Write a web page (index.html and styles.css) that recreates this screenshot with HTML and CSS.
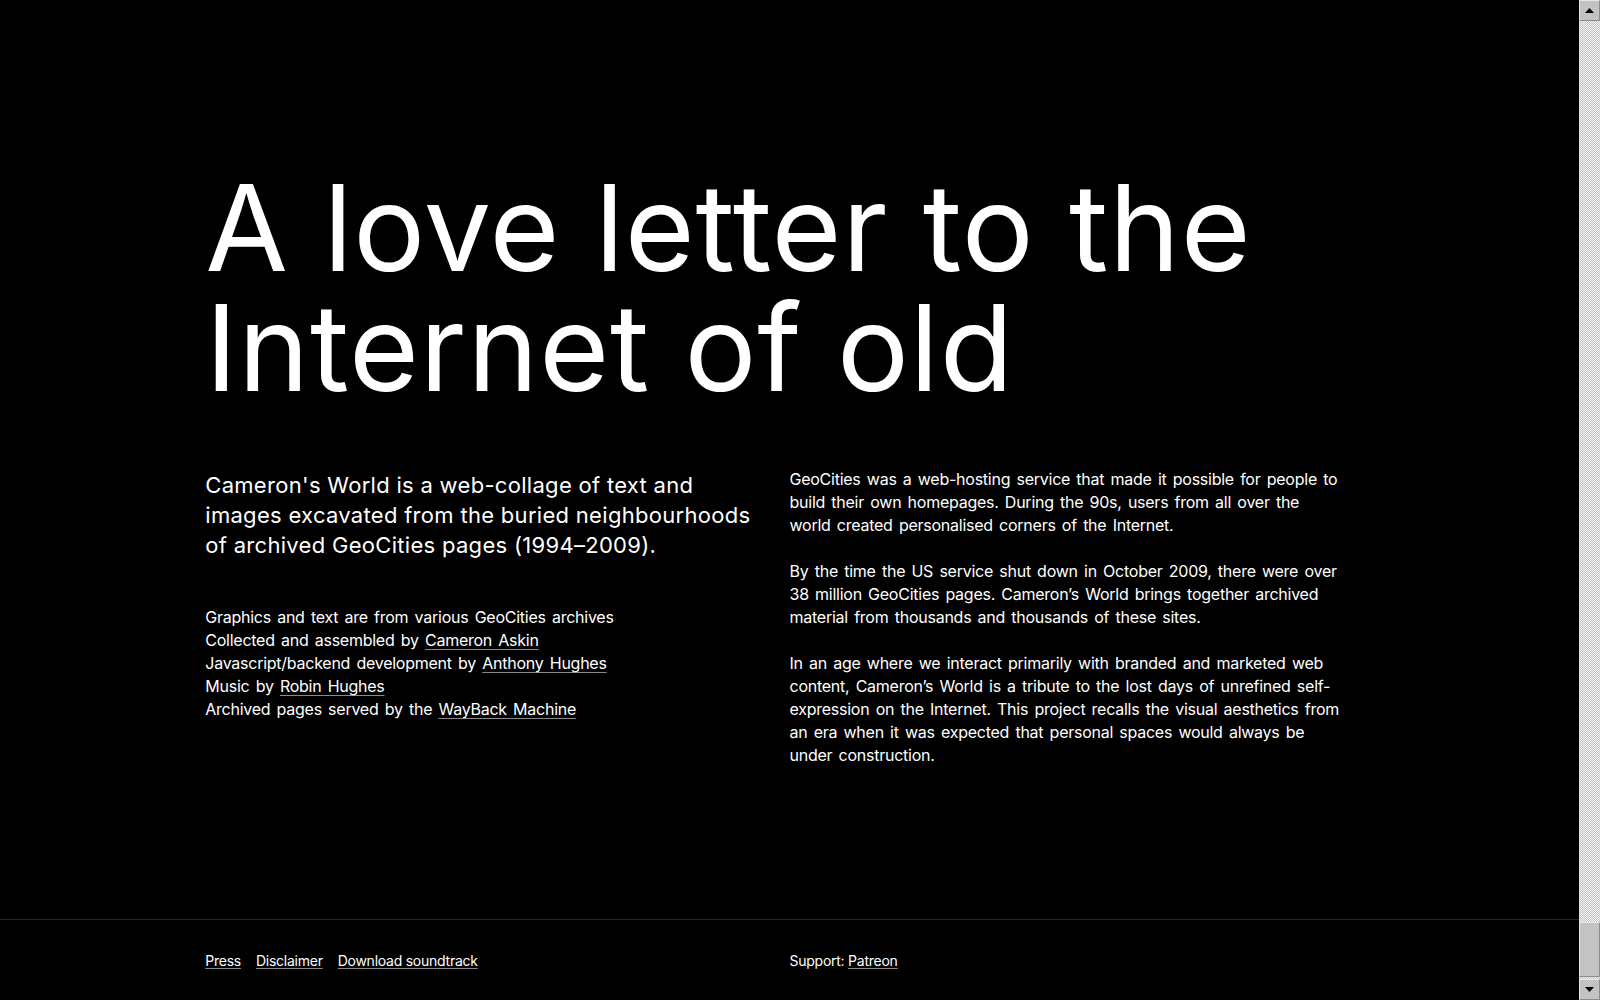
FILE: index.html
```html
<!DOCTYPE html>
<html>
<head>
  <meta charset="UTF-8">
  <title>Cameron's World</title>
  <link rel="stylesheet" href="styles.css">
</head>

<body>
  <div class="page">
    <section class="about">
      <h1 class="title">A love letter to the<br>Internet of old</h1>

      <div class="columns">
        <div class="col">
          <p class="lead">Cameron's World is a web-collage of text and images excavated from the buried neighbourhoods of archived GeoCities pages (1994&ndash;2009).</p>
          <p class="credits">
            Graphics and text are from various GeoCities archives<br>
            Collected and assembled by <a href="#">Cameron Askin</a><br>
            Javascript/backend development by <a href="#">Anthony Hughes</a><br>
            Music by <a href="#">Robin Hughes</a><br>
            Archived pages served by the <a href="#">WayBack Machine</a>
          </p>
        </div>
        <div class="col">
          <p>GeoCities was a web-hosting service that made it possible for people to build their own homepages. During the 90s, users from all over the world created personalised corners of the Internet.</p>
          <p>By the time the US service shut down in October 2009, there were over 38 million GeoCities pages. Cameron&rsquo;s World brings together archived material from thousands and thousands of these sites.</p>
          <p>In an age where we interact primarily with branded and marketed web content, Cameron&rsquo;s World is a tribute to the lost days of unrefined self-expression on the Internet. This project recalls the visual aesthetics from an era when it was expected that personal spaces would always be under construction.</p>
        </div>
      </div>
    </section>

    <footer class="footer">
      <div class="columns">
        <div class="col links">
          <a href="#">Press</a>
          <a href="#">Disclaimer</a>
          <a href="#">Download soundtrack</a>
        </div>
        <div class="col">Support: <a href="#">Patreon</a></div>
      </div>
    </footer>
  </div>

  <!-- window scrollbar, scrolled all the way down -->
  <div class="scrollbar">
    <div class="sb-btn">
      <svg width="9" height="5" viewBox="0 0 9 5"><path d="M4.5 0 L9 5 L0 5 Z" fill="#000"/></svg>
    </div>
    <div class="sb-track">
      <div class="sb-thumb"></div>
    </div>
    <div class="sb-btn">
      <svg width="9" height="5" viewBox="0 0 9 5"><path d="M0 0 L9 0 L4.5 5 Z" fill="#000"/></svg>
    </div>
  </div>
</body>
</html>
```

FILE: styles.css
```css
/*********
 * base  *
 *********/
html { background: #000; }
body {
  margin: 0;
  display: flex;
  height: 100vh;
  overflow: hidden;
  background: #000;
  color: #fff;
  font-family: Inter, "Liberation Sans", sans-serif;
  font-size: 16px;
  line-height: 23px;
}
a {
  color: #fff;
  text-decoration: underline;
  text-decoration-color: #8a8a8a;
  text-decoration-thickness: 1px;
  text-underline-offset: 3px;
}
p { margin: 0; }

.page {
  flex: 1;
  min-width: 0;
}

/***************
 * about block *
 ***************/
.about {
  padding: 168px 13% 152px;
}
.title {
  margin: 0 0 60px;
  font-size: 120px;
  line-height: 120px;
  font-weight: 400;
  letter-spacing: 0.8px;
}

.columns {
  display: flex;
}
.columns .col {
  width: 50%;
  box-sizing: border-box;
  padding-right: 30px;
}
/* body copy: a touch tighter letters, wider spaces */
.about .col {
  letter-spacing: -0.25px;
  word-spacing: 2px;
}
.col p + p { margin-top: 23px; }

.about .col .lead {
  margin-top: 2px;
  font-size: 22px;
  line-height: 30px;
  letter-spacing: 0.3px;
  word-spacing: 0;
}
.col .credits { margin-top: 46px; }

/**********
 * footer *
 **********/
.footer {
  border-top: 1px solid #262626;
  padding: 31px 13% 29px;
  font-size: 14px;
  line-height: 20px;
  letter-spacing: -0.25px;
}
.footer a { text-underline-offset: 2px; }
.footer .links {
  display: flex;
  gap: 15px;
}

/*************
 * scrollbar *
 *************/
.scrollbar {
  width: 21px;
  flex: none;
  display: flex;
  flex-direction: column;
}
.sb-btn {
  height: 21px;
  flex: none;
  display: flex;
  align-items: center;
  justify-content: center;
  box-sizing: border-box;
  background: #c3c3c3;
  border: 1px solid #e6e6e6;
  border-right-color: #8c8c8c;
  border-bottom-color: #8c8c8c;
}
.sb-track {
  flex: 1;
  display: flex;
  flex-direction: column;
  justify-content: flex-end;
  padding-bottom: 2px;
  background: repeating-conic-gradient(#c4c4c4 0 25%, #f2f2f2 0 50%) 0 0 / 2px 2px;
}
.sb-thumb {
  height: 55px;
  box-sizing: border-box;
  background: #c3c3c3;
  border: 1px solid #e6e6e6;
  border-right-color: #8c8c8c;
  border-bottom-color: #8c8c8c;
}
```
